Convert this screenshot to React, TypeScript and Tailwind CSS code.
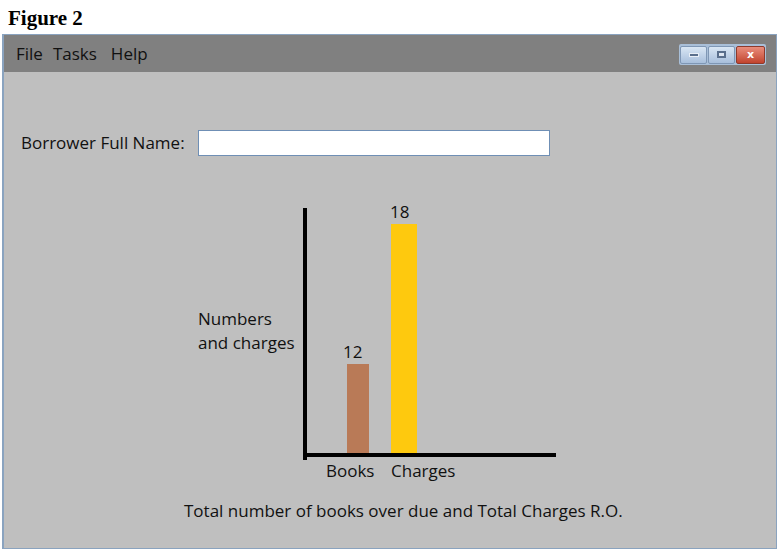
import React from "react";

export default function App() {
  const font = { fontFamily: "'Open Sans', Lato, sans-serif" };
  return (
    <div className="w-[778px] h-[551px] bg-white relative overflow-hidden" style={font}>
      <div className="h-[34px] pl-[8px] pt-[6px] text-[21px] font-bold leading-[24px] text-black" style={{ fontFamily: "'Liberation Serif', serif" }}>
        Figure 2
      </div>
      <div className="ml-[2px] w-[775px] h-[515px] border border-[#8aa3bf] border-l-2 flex flex-col">
        <div className="h-[37px] bg-[#808080] flex items-center justify-between pl-[12px] pr-[10px]">
          <div className="flex items-center text-[17px] text-[#111] gap-[10px]">
            <span>File</span>
            <span>Tasks</span>
            <span className="ml-[4px]">Help</span>
          </div>
          <div className="flex items-center h-[21px] p-[1px] bg-[#a9bfd8] rounded-[2px] gap-[1px] mt-[2px]">
            <div className="w-[27px] h-[18px] rounded-[2px] bg-gradient-to-b from-[#d9e6f4] to-[#a8bfdc] border border-[#7f97b5] flex items-center justify-center">
              <div className="w-[10px] h-[4px] bg-[#5a6f8c] border border-[#e8eef6]" />
            </div>
            <div className="w-[27px] h-[18px] rounded-[2px] bg-gradient-to-b from-[#d9e6f4] to-[#a8bfdc] border border-[#7f97b5] flex items-center justify-center">
              <div className="w-[9px] h-[7px] border-2 border-[#5a6f8c] bg-[#dfe7f2]" />
            </div>
            <div className="w-[29px] h-[18px] rounded-[2px] bg-gradient-to-b from-[#e98d7c] to-[#c1432e] border border-[#8e3a2c] flex items-center justify-center text-white text-[11px] font-bold leading-none" style={{ fontFamily: "'DejaVu Sans', sans-serif" }}>
              x
            </div>
          </div>
        </div>
        <div className="flex-1 bg-[#bfbfbf] relative">
          <div className="flex items-center pl-[17px] pt-[58px]">
            <span className="text-[17px] text-[#111] w-[177px] whitespace-nowrap">Borrower Full Name:</span>
            <div className="w-[352px] h-[26px] bg-white border border-[#6f8fb5]" />
          </div>
          {/* chart */}
          <div className="absolute left-[190px] top-[131px] w-[380px] h-[290px]">
            <svg className="absolute left-0 top-0" width="380" height="260">
              <rect x="109" y="5" width="4" height="252" fill="#000" />
              <rect x="109" y="250" width="253" height="4" fill="#000" />
              <rect x="153" y="161" width="22" height="89" fill="#b97a57" />
              <rect x="197" y="21" width="26" height="229" fill="#fec90e" />
            </svg>
            <span className="absolute left-[196px] top-[-4px] text-[17px] text-[#111]">18</span>
            <span className="absolute left-[149px] top-[136px] text-[17px] text-[#111]">12</span>
            <span className="absolute left-[4px] top-[104px] text-[17px] leading-[24px] text-[#111]">
              Numbers
              <br />
              and charges
            </span>
            <span className="absolute left-[132px] top-[255px] text-[17px] text-[#111]">Books</span>
            <span className="absolute left-[197px] top-[255px] text-[17px] text-[#111]">Charges</span>
          </div>
          <div className="absolute left-[180px] top-[426px] text-[17px] text-[#111] whitespace-nowrap">
            Total number of books over due and Total Charges R.O.
          </div>
        </div>
      </div>
    </div>
  );
}
